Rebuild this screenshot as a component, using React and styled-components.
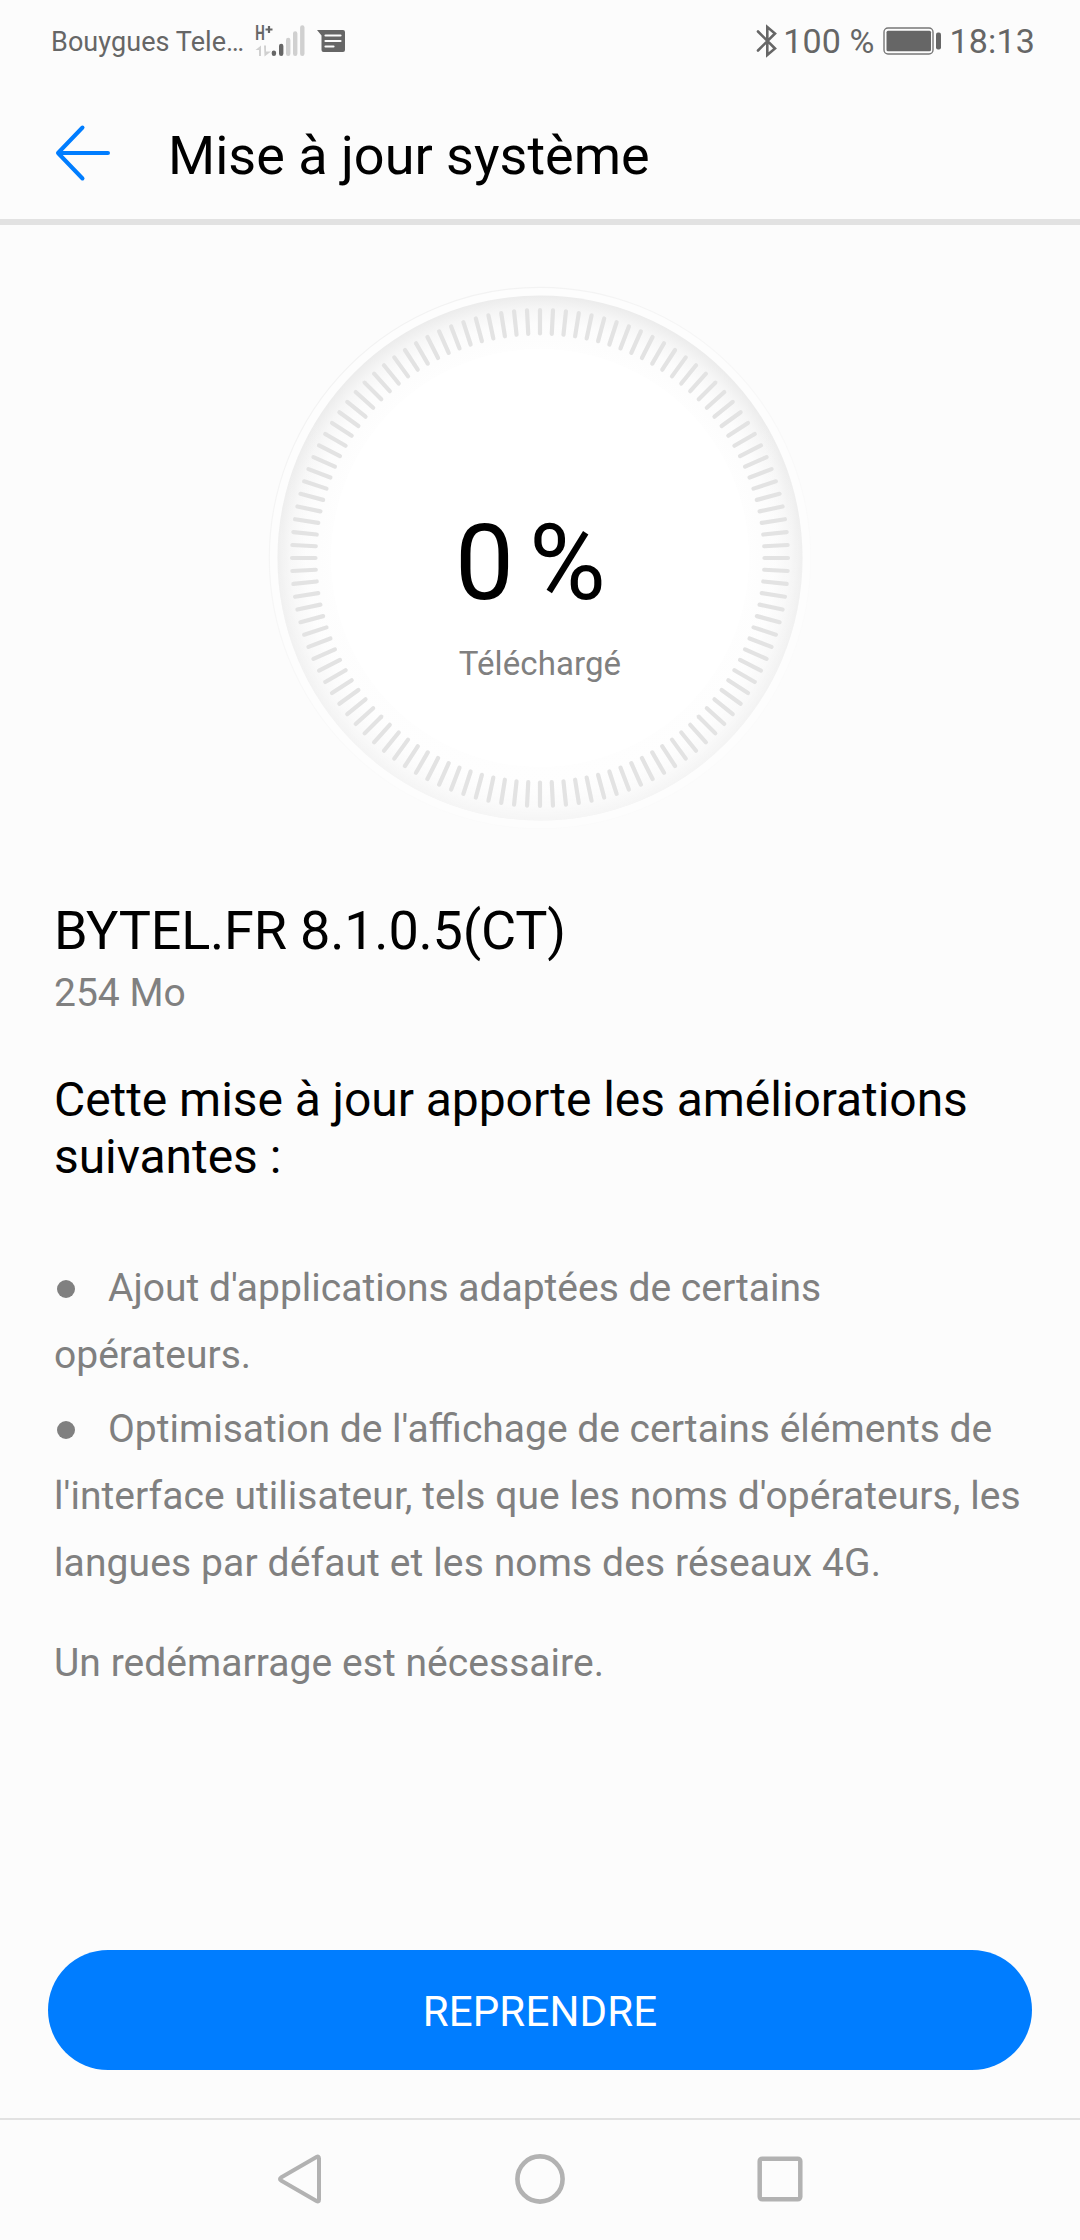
import React from "react";
import styled, { createGlobalStyle } from "styled-components";

const GlobalStyle = createGlobalStyle`
  * {
    box-sizing: border-box;
  }
  body {
    margin: 0;
    background: #fcfcfc;
    font-family: Roboto, sans-serif;
  }
`;

const Screen = styled.div`
  display: flex;
  flex-direction: column;
  width: 1080px;
  height: 2240px;
  background: #fcfcfc;
  overflow: hidden;
`;

const StatusBar = styled.div`
  display: flex;
  align-items: center;
  justify-content: space-between;
  height: 82px;
  padding: 0 45px 0 51px;
  color: #666;
`;

const StatusGroup = styled.div`
  display: flex;
  align-items: center;
  gap: ${(props) => props.$gap}px;
  > svg {
    display: block;
    flex: none;
  }
`;

const Carrier = styled.span`
  width: 194px;
  padding-top: 2px;
  font-size: 27px;
  line-height: 32px;
  letter-spacing: 0.07px;
  white-space: nowrap;
`;

const StatusText = styled.span`
  font-size: 34px;
  line-height: 40px;
  letter-spacing: 0.15px;
  white-space: nowrap;
`;

const Bluetooth = styled.span`
  display: flex;
  margin-right: -3px;
`;

const Header = styled.header`
  display: flex;
  align-items: center;
  height: 143px;
  padding: 5px 0 0 54px;
  border-bottom: 6px solid #e2e2e2;
`;

const BackButton = styled.button`
  display: flex;
  width: 58px;
  padding: 0;
  border: none;
  background: none;
`;

const Title = styled.h1`
  margin: 5px 0 0 56px;
  font-size: 54px;
  font-weight: 400;
  line-height: 64px;
  color: #000;
`;

const Dial = styled.section`
  display: grid;
  justify-items: center;
  height: 560px;
  margin-top: 53px;
  > * {
    grid-area: 1 / 1;
  }
`;

const DialText = styled.div`
  padding-top: 224px;
  text-align: center;
`;

const Percent = styled.div`
  display: flex;
  justify-content: center;
  gap: 15px;
  margin-right: 19px;
  font-size: 105px;
  line-height: 123px;
  color: #000;
`;

const DialLabel = styled.div`
  margin-top: 19px;
  font-size: 33px;
  line-height: 39px;
  letter-spacing: 0.1px;
  color: #808080;
`;

const Content = styled.main`
  flex: 1;
  padding: 61px 50px 0 54px;
  color: #808080;
  font-size: 39px;
`;

const Version = styled.h2`
  margin: 0;
  font-size: 54px;
  font-weight: 400;
  line-height: 64px;
  letter-spacing: -0.2px;
  color: #000;
`;

const Size = styled.p`
  margin: 7px 0 55px;
  line-height: 46px;
`;

const Intro = styled.h3`
  margin: 0 0 70px;
  font-size: 48px;
  font-weight: 400;
  line-height: 57px;
  letter-spacing: -0.06px;
  color: #000;
`;

const ChangeList = styled.ul`
  display: flex;
  flex-direction: column;
  gap: 7px;
  margin: 0;
  padding: 0;
  list-style: none;
`;

const Change = styled.li`
  line-height: 67px;
  &::before {
    content: "";
    display: inline-block;
    width: 18px;
    height: 18px;
    margin: 0 33px 0 3px;
    border-radius: 50%;
    background: #808080;
    vertical-align: 3px;
  }
`;

const Line = styled.span`
  letter-spacing: ${(props) => (props.$tracking ? `${props.$tracking}px` : "normal")};
  white-space: nowrap;
`;

const Note = styled.p`
  margin: 33px 0 0;
  line-height: 67px;
  letter-spacing: 0.05px;
`;

const ResumeButton = styled.button`
  height: 120px;
  margin: 0 48px 48px;
  padding: 3px 0 0;
  border: none;
  border-radius: 60px;
  background: #007dff;
  color: #fff;
  font-family: inherit;
  font-size: 42px;
  letter-spacing: 0.15px;
  text-transform: uppercase;
`;

const NavBar = styled.nav`
  display: flex;
  justify-content: center;
  gap: 180px;
  align-items: center;
  height: 122px;
  padding-bottom: 2px;
  border-top: 2px solid #e2e2e2;
  > svg {
    display: block;
  }
`;

const CHANGES = [
  [
    { text: "Ajout d'applications adaptées de certains" },
    { text: "opérateurs." },
  ],
  [
    { text: "Optimisation de l'affichage de certains éléments de" },
    { text: "l'interface utilisateur, tels que les noms d'opérateurs, les", tracking: 0.05 },
    { text: "langues par défaut et les noms des réseaux 4G.", tracking: 0.12 },
  ],
];

const TICKS = 120;

function SignalIcon() {
  return (
    <svg width="52" height="44" viewBox="0 -4 52 44">
      <text
        x="0.3"
        y="17"
        fill="#666"
        fontFamily="Roboto, sans-serif"
        fontWeight="700"
        fontSize="20"
        textLength="9.5"
        lengthAdjust="spacingAndGlyphs"
      >
        H
      </text>
      <path d="M10.5 6.5h7M14 3v7" stroke="#666" strokeWidth="2.2" />
      <path d="M6 22.5V33H4v-6H0.5zM9 22.5h2v6h5L9.5 33.5z" fill="#d0d0d0" />
      <g strokeWidth="4.4" strokeLinecap="round">
        <path d="M18.9 29.6v1.2M26.2 23v7.8" stroke="#666" />
        <path d="M33.2 17v13.8M40.2 10.500v20.3M47.3 4.500v26.3" stroke="#d0d0d0" />
      </g>
    </svg>
  );
}

function MessageIcon() {
  return (
    <svg width="28" height="22" viewBox="0 0 28 22">
      <path d="M0 0H26Q28 0 28 2V20Q28 22 26 22H6.5Q4.500 22 4.5 20V5.5z" fill="#666" />
      <path
        d="M8.5 5.5h15M8.5 11h15M8.5 16.5h8"
        stroke="#fcfcfc"
        strokeWidth="2.2"
        strokeLinecap="round"
      />
    </svg>
  );
}

function BluetoothIcon() {
  return (
    <svg width="22" height="34" viewBox="0 0 22 34">
      <path
        d="M2 7.5L19 24.5L11.3 31V3L19 9.5L2 26.5"
        fill="none"
        stroke="#666"
        strokeWidth="2.6"
        strokeLinecap="round"
      />
    </svg>
  );
}

function BatteryIcon() {
  return (
    <svg width="59" height="28" viewBox="0 0 59 28">
      <rect x="1" y="1" width="49" height="26" rx="4" fill="none" stroke="#777" strokeWidth="1.4" />
      <rect x="3.5" y="3.8" width="44.5" height="20.4" rx="1.5" fill="#666" />
      <rect x="53" y="5.500" width="5" height="17" rx="2" fill="#666" />
    </svg>
  );
}

function ProgressDial() {
  return (
    <svg width="560" height="560" viewBox="-280 -280 560 560">
      <defs>
        <radialGradient id="rim" gradientUnits="userSpaceOnUse" cx="0" cy="0" r="262.5">
          <stop offset="0.79" stopColor="#fefefe" />
          <stop offset="0.89" stopColor="#fcfcfc" />
          <stop offset="0.95" stopColor="#f6f6f6" />
          <stop offset="1" stopColor="#ececec" />
        </radialGradient>
        {/* the shadow on the rim fades towards the bottom */}
        <linearGradient id="light" x1="0" y1="0" x2="0" y2="1">
          <stop offset="0.2" stopColor="#fff" stopOpacity="0" />
          <stop offset="1" stopColor="#fff" stopOpacity="0.5" />
        </linearGradient>
        <linearGradient id="edge" x1="0" y1="0" x2="0.6" y2="1">
          <stop offset="0" stopColor="#f0f0f0" />
          <stop offset="0.8" stopColor="#fbfbfb" />
        </linearGradient>
      </defs>
      <circle r="270.7" fill="#fdfdfd" stroke="url(#edge)" strokeWidth="1.2" />
      <circle r="262.5" fill="url(#rim)" />
      <circle r="262.5" fill="url(#light)" />
      <circle r="209" fill="#fff" />
      <g stroke="#e3e3e3" strokeWidth="4.2" strokeLinecap="round">
        {Array.from({ length: TICKS }, (_, i) => (
          <line key={i} y1="-248" y2="-224.5" transform={`rotate(${(i * 360) / TICKS})`} />
        ))}
      </g>
    </svg>
  );
}

function App() {
  return (
    <>
      <GlobalStyle />
      <Screen>
        <StatusBar>
          <StatusGroup $gap={10}>
            <Carrier>Bouygues Tele…</Carrier>
            <SignalIcon />
            <MessageIcon />
          </StatusGroup>
          <StatusGroup $gap={8}>
            <Bluetooth>
              <BluetoothIcon />
            </Bluetooth>
            <StatusText>100 %</StatusText>
            <BatteryIcon />
            <StatusText>18:13</StatusText>
          </StatusGroup>
        </StatusBar>

        <Header>
          <BackButton aria-label="Retour">
            <svg width="58" height="58" viewBox="0 0 58 58">
              <path
                d="M28.5 3.5L4 29L28.5 54.5M4 29H54"
                fill="none"
                stroke="#007dff"
                strokeWidth="4"
                strokeLinecap="round"
                strokeLinejoin="round"
              />
            </svg>
          </BackButton>
          <Title>Mise à jour système</Title>
        </Header>

        <Dial>
          <ProgressDial />
          <DialText>
            <Percent>
              <span>0</span>
              <span>%</span>
            </Percent>
            <DialLabel>Téléchargé</DialLabel>
          </DialText>
        </Dial>

        <Content>
          <Version>BYTEL.FR 8.1.0.5(CT)</Version>
          <Size>254 Mo</Size>
          <Intro>Cette mise à jour apporte les améliorations suivantes :</Intro>
          <ChangeList>
            {CHANGES.map((lines) => (
              <Change key={lines[0].text}>
                {lines.map((line, i) => (
                  <React.Fragment key={line.text}>
                    {i > 0 && <br />}
                    <Line $tracking={line.tracking}>{line.text}</Line>
                  </React.Fragment>
                ))}
              </Change>
            ))}
          </ChangeList>
          <Note>Un redémarrage est nécessaire.</Note>
        </Content>

        <ResumeButton>Reprendre</ResumeButton>

        <NavBar>
          <svg width="60" height="60" viewBox="0 0 60 60">
            <path
              d="M46.5 8Q49 6.500 49 9.500V50.5Q49 53.5 46.5 52L11 31.5Q9 30 11 28.5z"
              fill="none"
              stroke="#b2b2b2"
              strokeWidth="4"
              strokeLinejoin="round"
            />
          </svg>
          <svg width="60" height="60" viewBox="0 0 60 60">
            <circle cx="30" cy="30" r="22.6" fill="none" stroke="#b2b2b2" strokeWidth="4.6" />
          </svg>
          <svg width="60" height="60" viewBox="0 0 60 60">
            <rect x="9.7" y="9.7" width="40.6" height="40.6" rx="2.5" fill="none" stroke="#b2b2b2" strokeWidth="4.5" />
          </svg>
        </NavBar>
      </Screen>
    </>
  );
}

export default App;
